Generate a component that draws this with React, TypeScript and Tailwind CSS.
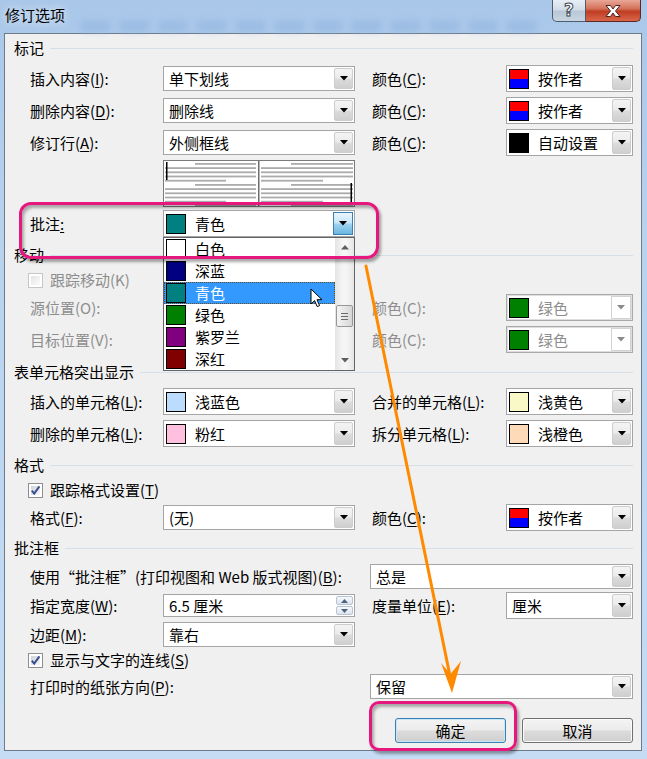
import React from 'react';

const BTN_GRAD = 'bg-[linear-gradient(to_bottom,#f4f4f4_0%,#ebebeb_48%,#dcdcdc_52%,#cfcfcf_100%)]';

function Tri({ color = '#000', up = false }: { color?: string; up?: boolean }) {
  return (
    <svg width="8" height="5" viewBox="0 0 8 5">
      <path d={up ? 'M0 4.5H8L4 0Z' : 'M0 0H8L4 4.5Z'} fill={color} />
    </svg>
  );
}

function DropBtn({ disabled, hot }: { disabled?: boolean; hot?: boolean }) {
  if (hot) {
    return (
      <div className="w-[20px] h-full border border-[#3c7fb1] bg-[linear-gradient(to_bottom,#eaf6fd_0%,#c6e6f7_48%,#9fd3f0_52%,#6cb6df_100%)] flex items-center justify-center">
        <Tri />
      </div>
    );
  }
  if (disabled) {
    return (
      <div className="w-[20px] h-full border border-[#d2d2d2] bg-white flex items-center justify-center">
        <Tri color="#8a8a8a" />
      </div>
    );
  }
  return (
    <div className={`w-[19px] h-full border border-[#cdcdcd] rounded-[2px] ${BTN_GRAD} flex items-center justify-center`}>
      <Tri />
    </div>
  );
}

function Swatch({ c, split }: { c?: string; split?: boolean }) {
  if (split) {
    return (
      <div className="w-[20px] h-[20px] shrink-0 border border-black flex flex-col">
        <div className="flex-1 bg-[#ff0000]" />
        <div className="flex-1 bg-[#0000ff]" />
      </div>
    );
  }
  return <div className={`w-[20px] h-[20px] shrink-0 border border-black ${c}`} />;
}

type ComboProps = {
  w: string;
  h?: string;
  text: string;
  swatch?: string;
  split?: boolean;
  disabled?: boolean;
  hot?: boolean;
};

function Combo({ w, h = 'h-[25px]', text, swatch, split, disabled, hot }: ComboProps) {
  const hasSw = !!swatch || !!split;
  return (
    <div
      className={`${w} ${h} shrink-0 flex bg-white border ${
        disabled ? 'border-[#a9a9a9] shadow-[inset_0_0_0_1px_#dedede]' : 'border-[#a5a5a5]'
      }`}
    >
      <div className={`flex-1 min-w-0 flex items-center ${hasSw ? 'pl-[2px]' : 'pl-[5px]'} ${disabled ? 'text-[#8d8d8d]' : ''}`}>
        {hasSw && <Swatch c={swatch} split={split} />}
        <span className={hasSw ? 'ml-[9px] whitespace-nowrap' : 'whitespace-nowrap'}>{text}</span>
      </div>
      <div className="p-[1px] flex">
        <DropBtn disabled={disabled} hot={hot} />
      </div>
    </div>
  );
}

function Acc({ t, k, off }: { t: string; k: string; off?: boolean }) {
  return (
    <span className="whitespace-nowrap">
      {t}(<span className={off ? '' : 'underline underline-offset-2'}>{k}</span>):
    </span>
  );
}

function Section({ title, mt }: { title: string; mt: string }) {
  return (
    <div className={`flex items-center h-[18px] pl-[9px] pr-[8px] ${mt}`}>
      <span className="whitespace-nowrap">{title}</span>
      <div className="flex-1 h-px bg-[#d5dfe5] ml-[6px]" />
    </div>
  );
}

function CheckBox({ checked, disabled }: { checked?: boolean; disabled?: boolean }) {
  return (
    <div className={`w-[15px] h-[15px] shrink-0 border ${disabled ? 'border-[#c6c6c6]' : 'border-[#8e8f8f]'} bg-white p-[2px]`}>
      <div
        className={`w-full h-full relative ${
          disabled ? 'bg-[linear-gradient(135deg,#e4e4e4,#fbfbfb)]' : 'bg-[linear-gradient(135deg,#cdd2da,#f7f8f9)]'
        }`}
      >
        {checked && (
          <svg width="11" height="11" viewBox="0 0 11 11" className="absolute -left-[1px] -top-[1px]">
            <path d="M1.8 5.6L4.2 8.6L9.4 1.4" stroke="#3a4f8f" strokeWidth="2" fill="none" />
          </svg>
        )}
      </div>
    </div>
  );
}

function Preview() {
  const ys = Array.from({ length: 11 }, (_, i) => 2 + i * 4.2);
  return (
    <div className="w-[192px] h-[47px] border border-[#7a7a7a] bg-white flex">
      <svg width="190" height="45" viewBox="0 0 190 45">
        {ys.map((y, i) => {
          const k = i % 5;
          const lx1 = k === 0 ? 31 : 1;
          const lx2 = k === 4 ? 62 : 92;
          const rx1 = k === 0 ? 127 : 97;
          const rx2 = k === 4 ? 159 : 189;
          return (
            <g key={i}>
              <rect x={lx1} y={y} width={lx2 - lx1} height="1.8" fill="#ababab" />
              <rect x={rx1} y={y} width={rx2 - rx1} height="1.8" fill="#ababab" />
            </g>
          );
        })}
        <rect x="94" y="0" width="1.5" height="45" fill="#6e6e6e" />
        <rect x="2" y="1" width="1.5" height="18" fill="#000" />
        <rect x="186.5" y="22" width="1.5" height="19" fill="#000" />
      </svg>
    </div>
  );
}

function ColorList() {
  const items: [string, string, boolean?][] = [
    ['bg-[#ffffff]', '白色'],
    ['bg-[#000080]', '深蓝'],
    ['bg-[#008080]', '青色', true],
    ['bg-[#008000]', '绿色'],
    ['bg-[#800080]', '紫罗兰'],
    ['bg-[#800000]', '深红'],
  ];
  return (
    <div className="absolute left-0 top-full w-[192px] h-[134px] bg-white border border-[#646464] flex z-10 overflow-hidden">
      <div className="flex-1 flex flex-col">
        {items.map(([c, t, sel]) => (
          <div
            key={t}
            className={`h-[22px] shrink-0 flex items-center pl-[1px] relative ${
              sel ? 'bg-[#3399ff] text-white border border-dotted border-[#6b4a1e]' : 'border border-transparent'
            }`}
          >
            <Swatch c={c} />
            <span className="ml-[9px]">{t}</span>
            {sel && (
              <svg width="13" height="20" viewBox="0 0 13 20" className="absolute left-[145px] top-[5px]">
                <path d="M1 1V16L4.6 12.6L7.2 18.6L9.6 17.6L7 11.7H12Z" fill="#fff" stroke="#000" strokeWidth="1" />
              </svg>
            )}
          </div>
        ))}
      </div>
      <div className="w-[19px] flex flex-col bg-[linear-gradient(to_right,#e4e4e4,#f5f5f5_40%,#f5f5f5_60%,#e6e6e6)]">
        <div className="h-[19px] flex items-center justify-center">
          <Tri color="#5e5e5e" up />
        </div>
        <div className="h-[48px]" />
        <div className="h-[22px] mx-[1px] rounded-[2px] border border-[#979797] bg-[linear-gradient(to_right,#f4f4f4,#e6e6e6_50%,#d6d6d6)] flex flex-col items-center justify-center gap-[2px]">
          <div className="w-[7px] h-px bg-[#6b6b6b]" />
          <div className="w-[7px] h-px bg-[#6b6b6b]" />
          <div className="w-[7px] h-px bg-[#6b6b6b]" />
        </div>
        <div className="flex-1" />
        <div className="h-[19px] flex items-center justify-center">
          <Tri color="#5e5e5e" />
        </div>
      </div>
    </div>
  );
}

function Spin() {
  return (
    <div className="w-[192px] h-[23px] shrink-0 border border-[#a5a5a5] bg-white flex">
      <div className="flex-1 flex items-center pl-[5px]">6.5 厘米</div>
      <div className="w-[19px] flex flex-col p-[1px] gap-[1px]">
        <div className="flex-1 border border-[#b7c4d3] rounded-[2px] bg-[linear-gradient(to_bottom,#f6f8fb,#dde4ec)] flex items-center justify-center">
          <svg width="7" height="4" viewBox="0 0 7 4"><path d="M0 4H7L3.5 0Z" fill="#4a6382" /></svg>
        </div>
        <div className="flex-1 border border-[#b7c4d3] rounded-[2px] bg-[linear-gradient(to_bottom,#f6f8fb,#dde4ec)] flex items-center justify-center">
          <svg width="7" height="4" viewBox="0 0 7 4"><path d="M0 0H7L3.5 4Z" fill="#4a6382" /></svg>
        </div>
      </div>
    </div>
  );
}

const LBL = 'w-[133px] shrink-0';
const GAP = 'w-[17px] shrink-0';
const RLBL = 'w-[134px] shrink-0';

export default function App() {
  return (
    <div className="relative w-[647px] h-[759px] overflow-hidden bg-[linear-gradient(to_bottom,#a9c7e9_0%,#b8d2ee_30%,#c5dcf4_100%)] font-['Noto_Sans_CJK_SC',sans-serif] text-[15px] leading-[18px] text-black">
      {/* title bar */}
      <div className="h-[33px] flex items-start justify-between relative">
        <div className="absolute left-[80px] right-[110px] top-[20px] h-[12px] flex gap-[8px] blur-[3px] opacity-50">
          {Array.from({ length: 12 }, (_, i) => (
            <div key={i} className="flex-1 rounded-[4px] bg-[#8fb3de]" />
          ))}
        </div>
        <div className="relative pl-[5px] pt-[6px] [text-shadow:0_0_8px_#ffffff]">修订选项</div>
        <div className="relative flex mr-[6px]">
          <div className="w-[34px] h-[22px] border border-[#4e5d6e] border-t-0 rounded-bl-[5px] bg-[linear-gradient(to_bottom,#e8eef5_0%,#d3dce7_45%,#b9c7d6_55%,#c9d5e2_100%)] flex items-center justify-center">
            <span className="text-[17px] font-bold leading-none text-white [-webkit-text-stroke:1px_#3b4756] font-['DejaVu_Sans',sans-serif]">?</span>
          </div>
          <div className="w-[55px] h-[22px] border border-[#5a2a22] border-t-0 border-l-0 rounded-br-[5px] bg-[linear-gradient(to_bottom,#e9a797_0%,#d4735c_40%,#c03d22_55%,#d9664a_100%)] flex items-center justify-center">
            <svg width="20" height="14" viewBox="0 0 20 14">
              <path
                d="M3 1.5H7.5L10 5L12.5 1.5H17L12.5 7L17 12.5H12.5L10 9L7.5 12.5H3L7.5 7Z"
                fill="#fff"
                stroke="#4a2620"
                strokeWidth="1"
                strokeLinejoin="round"
              />
            </svg>
          </div>
        </div>
      </div>

      {/* dialog panel */}
      <div className="ml-[4px] w-[638px] h-[718px] border border-[#6d7b8a] bg-[#f0f0f0] flex flex-col">
        <Section title="标记" mt="mt-[5px]" />

        <div className="flex items-center h-[27px] pl-[25px] mt-[8px]">
          <div className={LBL}><Acc t="插入内容" k="I" /></div>
          <Combo w="w-[192px]" text="单下划线" />
          <div className={GAP} />
          <div className={RLBL}><Acc t="颜色" k="C" /></div>
          <Combo w="w-[127px]" h="h-[27px]" split text="按作者" />
        </div>
        <div className="flex items-center h-[27px] pl-[25px] mt-[5px]">
          <div className={LBL}><Acc t="删除内容" k="D" /></div>
          <Combo w="w-[192px]" text="删除线" />
          <div className={GAP} />
          <div className={RLBL}><Acc t="颜色" k="C" /></div>
          <Combo w="w-[127px]" h="h-[27px]" split text="按作者" />
        </div>
        <div className="flex items-center h-[27px] pl-[25px] mt-[5px]">
          <div className={LBL}><Acc t="修订行" k="A" /></div>
          <Combo w="w-[192px]" text="外侧框线" />
          <div className={GAP} />
          <div className={RLBL}><Acc t="颜色" k="C" /></div>
          <Combo w="w-[127px]" h="h-[27px]" swatch="bg-[#000000]" text="自动设置" />
        </div>

        <div className="flex pl-[158px] mt-[4px]">
          <Preview />
        </div>

        <div className="flex items-center h-[27px] pl-[25px] mt-[3px]">
          <div className={LBL}>
            批注<span className="underline underline-offset-2">:</span>
          </div>
          <div className="relative">
            <Combo w="w-[192px]" h="h-[27px]" swatch="bg-[#008080]" text="青色" hot />
            <ColorList />
          </div>
        </div>

        <Section title="移动" mt="mt-[9px]" />
        <div className="flex items-center h-[20px] pl-[23px] mt-[6px] text-[#8d8d8d]">
          <CheckBox disabled />
          <span className="ml-[7px]">跟踪移动(K)</span>
        </div>
        <div className="flex items-center h-[27px] pl-[25px] mt-[4px] text-[#8d8d8d]">
          <div className={LBL}><Acc t="源位置" k="O" off /></div>
          <div className="w-[192px] shrink-0" />
          <div className={GAP} />
          <div className={RLBL}><Acc t="颜色" k="C" off /></div>
          <Combo w="w-[127px]" h="h-[27px]" swatch="bg-[#008000]" text="绿色" disabled />
        </div>
        <div className="flex items-center h-[27px] pl-[25px] mt-[5px] text-[#8d8d8d]">
          <div className={LBL}><Acc t="目标位置" k="V" off /></div>
          <div className="w-[192px] shrink-0" />
          <div className={GAP} />
          <div className={RLBL}><Acc t="颜色" k="C" off /></div>
          <Combo w="w-[127px]" h="h-[27px]" swatch="bg-[#008000]" text="绿色" disabled />
        </div>

        <Section title="表单元格突出显示" mt="mt-[10px]" />
        <div className="flex items-center h-[27px] pl-[25px] mt-[7px]">
          <div className={LBL}><Acc t="插入的单元格" k="L" /></div>
          <Combo w="w-[192px]" h="h-[27px]" swatch="bg-[#bcdcfe]" text="浅蓝色" />
          <div className={GAP} />
          <div className={RLBL}><Acc t="合并的单元格" k="L" /></div>
          <Combo w="w-[127px]" h="h-[27px]" swatch="bg-[#f9f9c8]" text="浅黄色" />
        </div>
        <div className="flex items-center h-[27px] pl-[25px] mt-[5px]">
          <div className={LBL}><Acc t="删除的单元格" k="L" /></div>
          <Combo w="w-[192px]" h="h-[27px]" swatch="bg-[#ffc0e0]" text="粉红" />
          <div className={GAP} />
          <div className={RLBL}><Acc t="拆分单元格" k="L" /></div>
          <Combo w="w-[127px]" h="h-[27px]" swatch="bg-[#ffdab8]" text="浅橙色" />
        </div>

        <Section title="格式" mt="mt-[9px]" />
        <div className="flex items-center h-[20px] pl-[23px] mt-[6px]">
          <CheckBox checked />
          <span className="ml-[7px]">
            跟踪格式设置(<span className="underline underline-offset-2">T</span>)
          </span>
        </div>
        <div className="flex items-center h-[27px] pl-[25px] mt-[4px]">
          <div className={LBL}><Acc t="格式" k="F" /></div>
          <Combo w="w-[192px]" text="(无)" />
          <div className={GAP} />
          <div className={RLBL}><Acc t="颜色" k="C" /></div>
          <Combo w="w-[127px]" h="h-[27px]" split text="按作者" />
        </div>

        <Section title="批注框" mt="mt-[8px]" />
        <div className="flex items-center h-[25px] pl-[25px] mt-[7px]">
          <div className="w-[340px] shrink-0">
            <Acc t="使用“批注框”(打印视图和 Web 版式视图)" k="B" />
          </div>
          <Combo w="w-[263px]" text="总是" />
        </div>
        <div className="flex items-center h-[27px] pl-[25px] mt-[3px]">
          <div className={LBL}><Acc t="指定宽度" k="W" /></div>
          <Spin />
          <div className={GAP} />
          <div className={RLBL}><Acc t="度量单位" k="E" /></div>
          <Combo w="w-[127px]" h="h-[27px]" text="厘米" />
        </div>
        <div className="flex items-center h-[25px] pl-[25px] mt-[3px]">
          <div className={LBL}><Acc t="边距" k="M" /></div>
          <Combo w="w-[192px]" text="靠右" />
        </div>
        <div className="flex items-center h-[20px] pl-[23px] mt-[3px]">
          <CheckBox checked />
          <span className="ml-[7px]">
            显示与文字的连线(<span className="underline underline-offset-2">S</span>)
          </span>
        </div>
        <div className="flex items-center h-[25px] pl-[25px] mt-[4px]">
          <div className="w-[340px] shrink-0"><Acc t="打印时的纸张方向" k="P" /></div>
          <Combo w="w-[263px]" text="保留" />
        </div>

        <div className="flex justify-end gap-[16px] pr-[8px] mt-[19px]">
          <button className={`w-[111px] h-[25px] rounded-[3px] border border-[#3c7fb1] shadow-[inset_0_0_0_1px_#c7e7f8] ${BTN_GRAD} flex items-center justify-center`}>
            确定
          </button>
          <button className={`w-[111px] h-[25px] rounded-[3px] border border-[#707070] shadow-[inset_0_0_0_1px_#fbfbfb] ${BTN_GRAD} flex items-center justify-center`}>
            取消
          </button>
        </div>
      </div>

      {/* annotations drawn over the dialog */}
      <div className="absolute left-[19px] top-[202px] w-[360px] h-[57px] rounded-[12px] border-[3px] border-[#e6177d] shadow-[2px_3px_3px_rgba(0,0,0,0.35),inset_2px_3px_3px_rgba(0,0,0,0.3)] z-20 pointer-events-none" />
      <div className="absolute left-[369px] top-[701px] w-[148px] h-[50px] rounded-[10px] border-[3px] border-[#e6177d] shadow-[2px_3px_3px_rgba(0,0,0,0.35),inset_2px_3px_3px_rgba(0,0,0,0.3)] z-20 pointer-events-none" />
      <svg className="absolute left-0 top-0 z-30 pointer-events-none" width="647" height="759" viewBox="0 0 647 759">
        <line x1="366" y1="266" x2="450" y2="676" stroke="#ff8a00" strokeWidth="3" strokeLinecap="round" />
        <path d="M452 693L441 663L450.5 674L461 661Z" fill="#ff8a00" />
      </svg>
    </div>
  );
}
